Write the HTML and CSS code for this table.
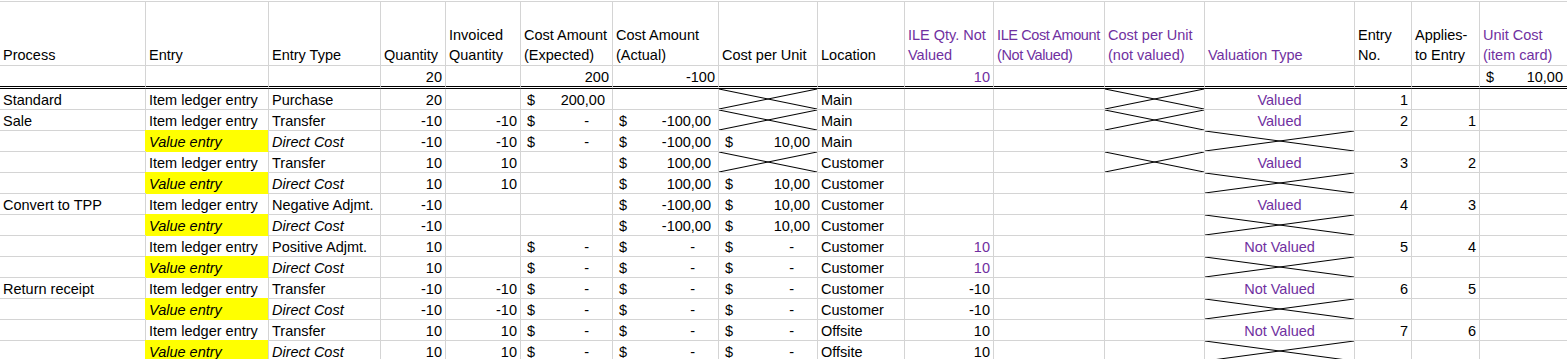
FILE: index.html
```html
<!DOCTYPE html>
<html>
<head>
    <title>Item ledger entries</title>
    <meta charset="utf-8">
    <link rel="stylesheet" href="styles.css">
</head>
<body>
    <table class="sheet">
        <colgroup>
            <col class="w-process">
            <col class="w-entry">
            <col class="w-type">
            <col class="w-qty">
            <col class="w-inv">
            <col class="w-expected">
            <col class="w-actual">
            <col class="w-cpu">
            <col class="w-location">
            <col class="w-ileqty">
            <col class="w-ilecost">
            <col class="w-cpunv">
            <col class="w-valtype">
            <col class="w-entryno">
            <col class="w-applies">
            <col class="w-unitcost">
        </colgroup>
        <thead>
            <tr class="head">
                <th>Process</th>
                <th>Entry</th>
                <th>Entry Type</th>
                <th>Quantity</th>
                <th>Invoiced<br>Quantity</th>
                <th>Cost Amount<br>(Expected)</th>
                <th>Cost Amount<br>(Actual)</th>
                <th>Cost per Unit</th>
                <th>Location</th>
                <th class="pu">ILE Qty. Not<br>Valued</th>
                <th class="pu tight">ILE Cost Amount<br>(Not Valued)</th>
                <th class="pu">Cost per Unit<br>(not valued)</th>
                <th class="pu">Valuation Type</th>
                <th>Entry<br>No.</th>
                <th>Applies-<br>to Entry</th>
                <th class="pu">Unit Cost<br>(item card)</th>
            </tr>
            <tr class="totals">
                <td></td><td></td><td></td>
                <td class="num">20</td>
                <td></td>
                <td class="num">200</td>
                <td class="num">-100</td>
                <td></td><td></td>
                <td class="num pu">10</td>
                <td></td><td></td><td></td><td></td><td></td>
                <td><div class="acc"><span>$</span><span>10,00</span></div></td>
            </tr>
        </thead>
        <tbody>
            <tr>
                <td>Standard</td><td>Item ledger entry</td><td>Purchase</td>
                <td class="num">20</td><td></td>
                <td><div class="acc"><span>$</span><span>200,00</span></div></td>
                <td></td>
                <td class="cross"></td>
                <td>Main</td><td></td><td></td>
                <td class="cross"></td>
                <td class="val">Valued</td>
                <td class="num">1</td><td></td><td></td>
            </tr>
            <tr>
                <td>Sale</td><td>Item ledger entry</td><td>Transfer</td>
                <td class="num">-10</td><td class="num">-10</td>
                <td><div class="acc"><span>$</span><span class="nil">-</span></div></td>
                <td><div class="acc"><span>$</span><span>-100,00</span></div></td>
                <td class="cross"></td>
                <td>Main</td><td></td><td></td>
                <td class="cross"></td>
                <td class="val">Valued</td>
                <td class="num">2</td><td class="num">1</td><td></td>
            </tr>
            <tr>
                <td></td><td class="ve">Value entry</td><td class="it">Direct Cost</td>
                <td class="num">-10</td><td class="num">-10</td>
                <td><div class="acc"><span>$</span><span class="nil">-</span></div></td>
                <td><div class="acc"><span>$</span><span>-100,00</span></div></td>
                <td><div class="acc"><span>$</span><span>10,00</span></div></td>
                <td>Main</td><td></td><td></td><td></td>
                <td class="cross"></td>
                <td></td><td></td><td></td>
            </tr>
            <tr>
                <td></td><td>Item ledger entry</td><td>Transfer</td>
                <td class="num">10</td><td class="num">10</td>
                <td></td>
                <td><div class="acc"><span>$</span><span>100,00</span></div></td>
                <td class="cross"></td>
                <td>Customer</td><td></td><td></td>
                <td class="cross"></td>
                <td class="val">Valued</td>
                <td class="num">3</td><td class="num">2</td><td></td>
            </tr>
            <tr>
                <td></td><td class="ve">Value entry</td><td class="it">Direct Cost</td>
                <td class="num">10</td><td class="num">10</td>
                <td></td>
                <td><div class="acc"><span>$</span><span>100,00</span></div></td>
                <td><div class="acc"><span>$</span><span>10,00</span></div></td>
                <td>Customer</td><td></td><td></td><td></td>
                <td class="cross"></td>
                <td></td><td></td><td></td>
            </tr>
            <tr>
                <td>Convert to TPP</td><td>Item ledger entry</td><td>Negative Adjmt.</td>
                <td class="num">-10</td><td></td>
                <td></td>
                <td><div class="acc"><span>$</span><span>-100,00</span></div></td>
                <td><div class="acc"><span>$</span><span>10,00</span></div></td>
                <td>Customer</td><td></td><td></td><td></td>
                <td class="val">Valued</td>
                <td class="num">4</td><td class="num">3</td><td></td>
            </tr>
            <tr>
                <td></td><td class="ve">Value entry</td><td class="it">Direct Cost</td>
                <td class="num">-10</td><td></td>
                <td></td>
                <td><div class="acc"><span>$</span><span>-100,00</span></div></td>
                <td><div class="acc"><span>$</span><span>10,00</span></div></td>
                <td>Customer</td><td></td><td></td><td></td>
                <td class="cross"></td>
                <td></td><td></td><td></td>
            </tr>
            <tr>
                <td></td><td>Item ledger entry</td><td>Positive Adjmt.</td>
                <td class="num">10</td><td></td>
                <td><div class="acc"><span>$</span><span class="nil">-</span></div></td>
                <td><div class="acc"><span>$</span><span class="nil">-</span></div></td>
                <td><div class="acc"><span>$</span><span class="nil">-</span></div></td>
                <td>Customer</td><td class="num pu">10</td><td></td><td></td>
                <td class="val">Not Valued</td>
                <td class="num">5</td><td class="num">4</td><td></td>
            </tr>
            <tr>
                <td></td><td class="ve">Value entry</td><td class="it">Direct Cost</td>
                <td class="num">10</td><td></td>
                <td><div class="acc"><span>$</span><span class="nil">-</span></div></td>
                <td><div class="acc"><span>$</span><span class="nil">-</span></div></td>
                <td><div class="acc"><span>$</span><span class="nil">-</span></div></td>
                <td>Customer</td><td class="num pu">10</td><td></td><td></td>
                <td class="cross"></td>
                <td></td><td></td><td></td>
            </tr>
            <tr>
                <td>Return receipt</td><td>Item ledger entry</td><td>Transfer</td>
                <td class="num">-10</td><td class="num">-10</td>
                <td><div class="acc"><span>$</span><span class="nil">-</span></div></td>
                <td><div class="acc"><span>$</span><span class="nil">-</span></div></td>
                <td><div class="acc"><span>$</span><span class="nil">-</span></div></td>
                <td>Customer</td><td class="num">-10</td><td></td><td></td>
                <td class="val">Not Valued</td>
                <td class="num">6</td><td class="num">5</td><td></td>
            </tr>
            <tr>
                <td></td><td class="ve">Value entry</td><td class="it">Direct Cost</td>
                <td class="num">-10</td><td class="num">-10</td>
                <td><div class="acc"><span>$</span><span class="nil">-</span></div></td>
                <td><div class="acc"><span>$</span><span class="nil">-</span></div></td>
                <td><div class="acc"><span>$</span><span class="nil">-</span></div></td>
                <td>Customer</td><td class="num">-10</td><td></td><td></td>
                <td class="cross"></td>
                <td></td><td></td><td></td>
            </tr>
            <tr>
                <td></td><td>Item ledger entry</td><td>Transfer</td>
                <td class="num">10</td><td class="num">10</td>
                <td><div class="acc"><span>$</span><span class="nil">-</span></div></td>
                <td><div class="acc"><span>$</span><span class="nil">-</span></div></td>
                <td><div class="acc"><span>$</span><span class="nil">-</span></div></td>
                <td>Offsite</td><td class="num">10</td><td></td><td></td>
                <td class="val">Not Valued</td>
                <td class="num">7</td><td class="num">6</td><td></td>
            </tr>
            <tr>
                <td></td><td class="ve">Value entry</td><td class="it">Direct Cost</td>
                <td class="num">10</td><td class="num">10</td>
                <td><div class="acc"><span>$</span><span class="nil">-</span></div></td>
                <td><div class="acc"><span>$</span><span class="nil">-</span></div></td>
                <td><div class="acc"><span>$</span><span class="nil">-</span></div></td>
                <td>Offsite</td><td class="num">10</td><td></td><td></td>
                <td class="cross"></td>
                <td></td><td></td><td></td>
            </tr>
        </tbody>
    </table>
</body>
</html>
```

FILE: styles.css
```css
html, body {
    margin: 0;
    padding: 0;
    overflow: hidden;
    background: #fff;
}

body {
    padding-top: 1px;
    font-family: "Liberation Sans", Arial, sans-serif;
    font-size: 14.5px;
    color: #000;
}

.sheet {
    border-spacing: 0;
    table-layout: fixed;
    width: 1571px;
}

/* column widths, gridline included */
.w-process  { width: 146px; }
.w-entry    { width: 123px; }
.w-type     { width: 112px; }
.w-qty      { width: 65px; }
.w-inv      { width: 75px; }
.w-expected { width: 92px; }
.w-actual   { width: 106px; }
.w-cpu      { width: 99px; }
.w-location { width: 87px; }
.w-ileqty   { width: 89px; }
.w-ilecost  { width: 111px; }
.w-cpunv    { width: 100px; }
.w-valtype  { width: 150px; }
.w-entryno  { width: 57px; }
.w-applies  { width: 68px; }
.w-unitcost { width: 91px; }

.sheet th,
.sheet td {
    border-right: 1px solid #d4d4d4;
    border-bottom: 1px solid #d4d4d4;
    padding: 2px 3px 0;
    line-height: 18px;
    white-space: nowrap;
    vertical-align: bottom;
    text-align: left;
    font-weight: normal;
}

.head th {
    border-top: 1px solid #d4d4d4;
    padding-top: 23px;
    line-height: 20px;
}

.head .tight {
    letter-spacing: -0.4px;
}

.totals td {
    border-bottom: 3px double #000;
}

.num {
    text-align: right !important;
}

.pu {
    color: #7030a0;
}

.val {
    text-align: center !important;
    color: #7030a0;
}

.it {
    font-style: italic;
}

.ve {
    background: #ffff00;
    font-style: italic;
    border-bottom-color: #ffff00 !important;
    box-shadow: -1px -1px 0 #ffff00;
}

/* accounting format: $ on the left, amount on the right */
.acc {
    display: flex;
    justify-content: space-between;
    padding: 0 4px 0 3px;
}

.acc .nil {
    margin-right: 16px;
}

/* crossed-out cell */
.cross {
    background:
        linear-gradient(to top right, transparent calc(50% - 1px), #000 50%, transparent calc(50% + 1px)),
        linear-gradient(to bottom right, transparent calc(50% - 1px), #000 50%, transparent calc(50% + 1px));
}
```
